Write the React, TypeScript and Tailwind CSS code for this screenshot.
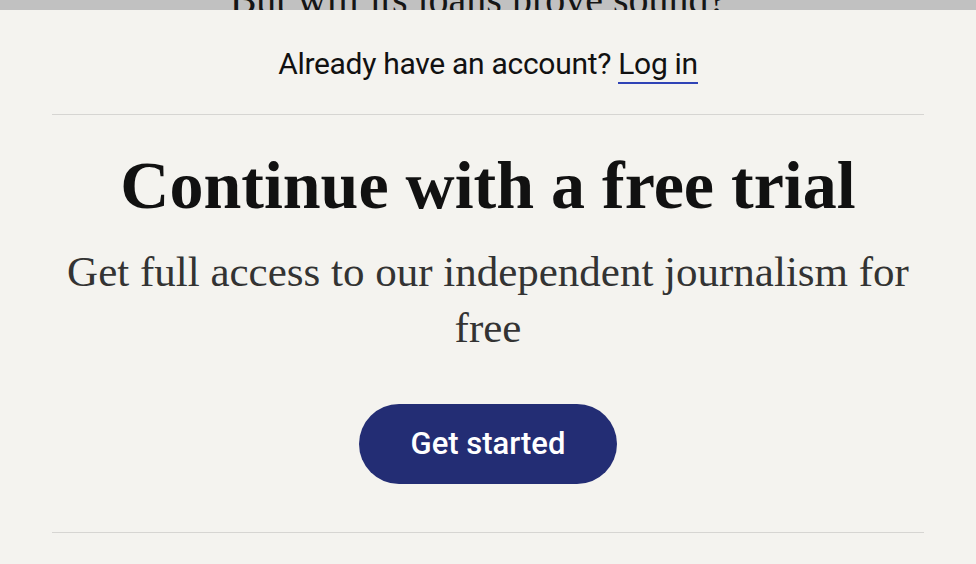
export default function App() {
  return (
    <div className="w-[976px] h-[564px] overflow-hidden bg-[#f4f3ef] flex flex-col">
      {/* dimmed article behind the paywall */}
      <div className="h-[10px] shrink-0 overflow-hidden bg-[#c1c1c1] flex items-end justify-center pr-[20px]">
        <p className="font-['Liberation_Serif',serif] text-[40px] leading-[40px] text-[#151515] mb-[-10px] whitespace-nowrap">
          But will its loans prove sound?
        </p>
      </div>

      <div className="flex flex-col items-center pt-[34px]">
        <p className="font-['Roboto',sans-serif] text-[30px] leading-[40px] text-[#111] tracking-[-0.3px]">
          Already have an account?{" "}
          <a className="text-[#111] border-b-2 border-[#2f43b6] pb-[1px]">Log in</a>
        </p>
      </div>

      <div className="mx-[52px] mt-[30px] border-t border-[#d6d5d2] flex flex-col items-center">
        <h1 className="mt-[32px] font-['Liberation_Serif',serif] font-bold text-[68px] leading-[76px] text-[#111]">
          Continue with a free trial
        </h1>
        <p className="mt-[21px] font-['Liberation_Serif',serif] text-[43px] leading-[56px] text-[#333] text-center">
          Get full access to our independent journalism for
          <br />
          free
        </p>
        <button className="mt-[48px] w-[258px] h-[80px] rounded-full bg-[#232d74] text-white font-['Roboto',sans-serif] font-medium text-[31px]">
          Get started
        </button>
      </div>

      <div className="mx-[52px] mt-[48px] border-t border-[#d6d5d2]" />
    </div>
  );
}
